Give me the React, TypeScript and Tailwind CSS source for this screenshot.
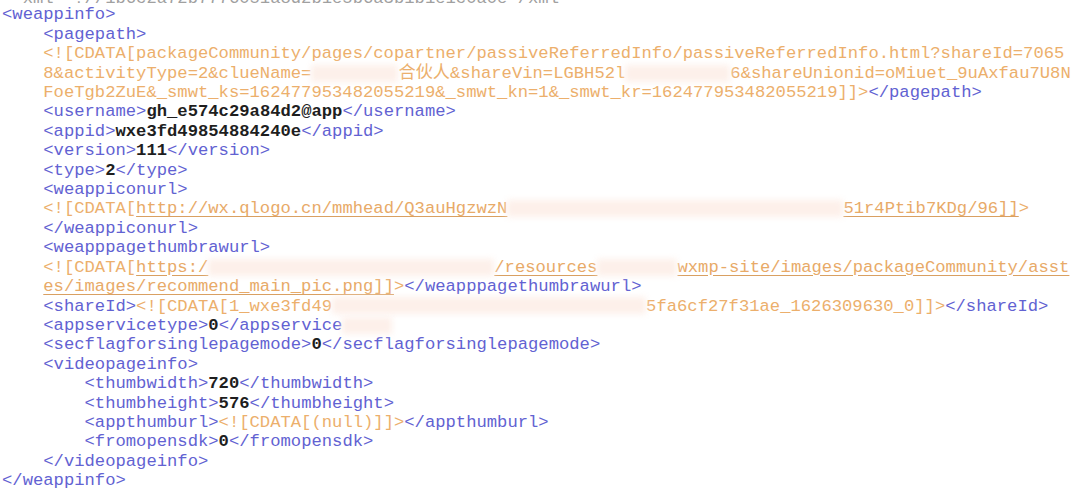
import React from "react";

type Seg =
  | { k: "t"; s: string } // tag, blue
  | { k: "c"; s: string } // cdata, orange
  | { k: "u"; s: string } // cdata link, orange underlined
  | { k: "v"; s: string } // value, bold black
  | { k: "g"; s: string } // top cut-off line, gray
  | { k: "b"; w: number }; // redacted blur patch

const t = (s: string): Seg => ({ k: "t", s });
const c = (s: string): Seg => ({ k: "c", s });
const u = (s: string): Seg => ({ k: "u", s });
const v = (s: string): Seg => ({ k: "v", s });
const b = (w: number): Seg => ({ k: "b", w });

const I1 = "    ";
const I2 = "        ";

const lines: Seg[][] = [
  [{ k: "g", s: "  xml  ?//1b6c2a72b7776051a8d2b1e5b6a3b1b1e1c0a0e /xml" }],
  [t("<weappinfo>")],
  [c(I1), t("<pagepath>")],
  [c(I1 + "<![CDATA[packageCommunity/pages/copartner/passiveReferredInfo/passiveReferredInfo.html?shareId=7065")],
  [c(I1 + "8&activityType=2&clueName="), b(87), c("合伙人&shareVin=LGBH52l"), b(105), c("6&shareUnionid=oMiuet_9uAxfau7U8N")],
  [c(I1 + "FoeTgb2ZuE&_smwt_ks=162477953482055219&_smwt_kn=1&_smwt_kr=162477953482055219]]>"), t("</pagepath>")],
  [c(I1), t("<username>"), v("gh_e574c29a84d2@app"), t("</username>")],
  [c(I1), t("<appid>"), v("wxe3fd49854884240e"), t("</appid>")],
  [c(I1), t("<version>"), v("111"), t("</version>")],
  [c(I1), t("<type>"), v("2"), t("</type>")],
  [c(I1), t("<weappiconurl>")],
  [c(I1 + "<![CDATA["), u("http://wx.qlogo.cn/mmhead/Q3auHgzwzN"), b(336), u("51r4Ptib7KDg/96]]"), c(">")],
  [c(I1), t("</weappiconurl>")],
  [c(I1), t("<weapppagethumbrawurl>")],
  [c(I1 + "<![CDATA["), u("https:/"), b(286), u("/resources"), b(80), u("wxmp-site/images/packageCommunity/asst")],
  [c(I1), u("es/images/recommend_main_pic.png]]"), c(">"), t("</weapppagethumbrawurl>")],
  [c(I1), t("<shareId>"), c("<![CDATA[1_wxe3fd49"), b(314), c("5fa6cf27f31ae_1626309630_0]]>"), t("</shareId>")],
  [c(I1), t("<appservicetype>"), v("0"), t("</appservice"), b(50)],
  [c(I1), t("<secflagforsinglepagemode>"), v("0"), t("</secflagforsinglepagemode>")],
  [c(I1), t("<videopageinfo>")],
  [c(I2), t("<thumbwidth>"), v("720"), t("</thumbwidth>")],
  [c(I2), t("<thumbheight>"), v("576"), t("</thumbheight>")],
  [c(I2), t("<appthumburl>"), c("<![CDATA[(null)]]>"), t("</appthumburl>")],
  [c(I2), t("<fromopensdk>"), v("0"), t("</fromopensdk>")],
  [c(I1), t("</videopageinfo>")],
  [t("</weappinfo>")],
  [c(" ")],
];

const Piece: React.FC<{ seg: Seg }> = ({ seg }) => {
  if (seg.k === "b") {
    return (
      <span
        className="inline-block h-[17px] align-middle bg-[#fdf0ea] blur-[3px]"
        style={{ width: seg.w }}
      />
    );
  }
  if (seg.k === "t") return <span className="text-[#6262d2]">{seg.s}</span>;
  if (seg.k === "c") return <span className="text-[#ecaf6c]">{seg.s}</span>;
  if (seg.k === "u")
    return (
      <span className="text-[#e8aa68] underline decoration-[#d9a062] underline-offset-[3px]">
        {seg.s}
      </span>
    );
  if (seg.k === "v") return <span className="font-bold text-[#1e1e1e]">{seg.s}</span>;
  return <span className="text-[#a0a0a0]">{seg.s}</span>;
};

export default function App() {
  return (
    <div className="w-[1080px] h-[495px] overflow-hidden bg-white">
      <div className="-mt-[14px] pl-[2px] font-['Liberation_Mono','Noto_Sans_CJK_SC',monospace] text-[17.2px] leading-[19.42px]">
        {lines.map((segs, i) => (
          <div
            key={i}
            className={
              i === 0
                ? "whitespace-pre h-[19.42px] leading-[26px]"
                : "whitespace-pre h-[19.42px]"
            }
          >
            {segs.map((seg, j) => (
              <Piece key={j} seg={seg} />
            ))}
          </div>
        ))}
      </div>
    </div>
  );
}
